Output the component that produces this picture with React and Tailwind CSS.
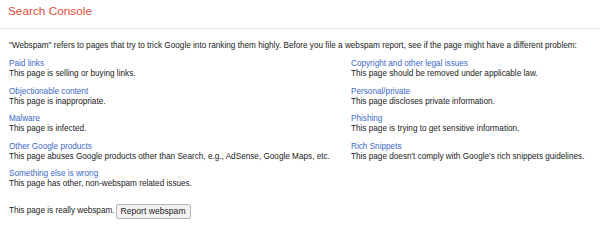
export default function App() {
  const left = [
    ["Paid links", "This page is selling or buying links."],
    ["Objectionable content", "This page is inappropriate."],
    ["Malware", "This page is infected."],
    ["Other Google products", "This page abuses Google products other than Search, e.g., AdSense, Google Maps, etc."],
    ["Something else is wrong", "This page has other, non-webspam related issues."],
  ];
  const right = [
    ["Copyright and other legal issues", "This page should be removed under applicable law."],
    ["Personal/private", "This page discloses private information."],
    ["Phishing", "This page is trying to get sensitive information."],
    ["Rich Snippets", "This page doesn't comply with Google's rich snippets guidelines."],
  ];
  const Item = ({ t, d }) => (
    <div className="mb-[7.5px]">
      <div className="text-[#3b68c7] leading-[10px]">{t}</div>
      <div className="text-[#222] leading-[10px] whitespace-nowrap">{d}</div>
    </div>
  );
  return (
    <div className="w-[600px] h-[241px] bg-white overflow-hidden" style={{ fontFamily: '"Liberation Sans", Arial, sans-serif' }}>
      <div className="h-[29px] border-b border-[#ebebeb] pl-[8px] pt-[3px]">
        <div className="text-[#dd4b39] text-[11.8px] leading-[16px]">Search Console</div>
      </div>
      <div className="px-[9px] pt-[12px] text-[8.2px]">
        <div className="text-[#222] leading-[10px]">
          "Webspam" refers to pages that try to trick Google into ranking them highly. Before you file a webspam report, see if the page might have a different problem:
        </div>
        <div className="flex mt-[8px]">
          <div className="w-[342px]">
            {left.map(([t, d]) => <Item key={t} t={t} d={d} />)}
          </div>
          <div>
            {right.map(([t, d]) => <Item key={t} t={t} d={d} />)}
          </div>
        </div>
        <div className="flex items-center mt-[7px] text-[#222]">
          <span>This page is really webspam.</span>
          <button className="ml-[1px] h-[15px] px-[4px] bg-[#f2f2f2] border border-[#b5b5b5] rounded-[2px] text-[#222] text-[8.6px] leading-[12px]">Report webspam</button>
        </div>
      </div>
    </div>
  );
}
